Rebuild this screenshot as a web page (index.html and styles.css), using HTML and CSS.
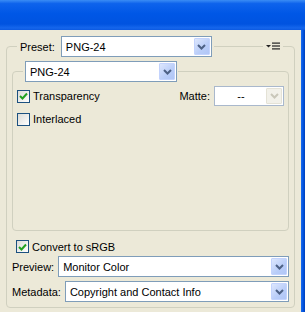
FILE: index.html
```html
<!DOCTYPE html>
<html lang="en">
<head>
  <meta charset="UTF-8">
  <title>Save for Web - PNG-24</title>
  <link rel="stylesheet" href="styles.css">
</head>
<body>

<div class="titlebar"></div>

<div class="window">
  <div class="panel">

    <!-- Preset group -->
    <fieldset class="group">
      <legend class="group-head">
        <span class="label">Preset:</span>
        <div class="combo combo-preset">
          <span class="combo-text">PNG-24</span>
          <span class="combo-btn"><svg width="9" height="6" viewBox="0 0 9 6"><path d="M1 1 L4.5 4.5 L8 1" fill="none" stroke="#4d6185" stroke-width="2"/></svg></span>
        </div>
      </legend>

      <div class="menu-btn">
        <svg width="14" height="8" viewBox="0 0 14 8">
          <path d="M0 3 H5 L2.5 5.5 Z" fill="#222"/>
          <rect x="6" y="0.5" width="8" height="1.2" fill="#222"/>
          <rect x="6" y="3.4" width="8" height="1.2" fill="#222"/>
          <rect x="6" y="6.3" width="8" height="1.2" fill="#222"/>
        </svg>
      </div>

      <!-- Format group -->
      <fieldset class="format">
        <legend class="format-head">
          <div class="combo combo-format">
            <span class="combo-text">PNG-24</span>
            <span class="combo-btn"><svg width="9" height="6" viewBox="0 0 9 6"><path d="M1 1 L4.5 4.5 L8 1" fill="none" stroke="#4d6185" stroke-width="2"/></svg></span>
          </div>
        </legend>

        <div class="options">
          <div class="row">
            <label class="check"><span class="box checked"><svg width="9" height="8" viewBox="0 0 9 8"><path d="M1 4 L3.5 6.5 L8 1.5" fill="none" stroke="#21a121" stroke-width="2"/></svg></span>Transparency</label>
            <div class="matte">
              <span class="label">Matte:</span>
              <div class="combo combo-matte disabled">
                <span class="combo-text">--</span>
                <span class="combo-btn"><svg width="9" height="6" viewBox="0 0 9 6"><path d="M1 1 L4.5 4.5 L8 1" fill="none" stroke="#c9c7ba" stroke-width="2"/></svg></span>
              </div>
            </div>
          </div>
          <div class="row">
            <label class="check"><span class="box"></span>Interlaced</label>
          </div>
        </div>
      </fieldset>

      <div class="row srgb">
        <label class="check"><span class="box checked"><svg width="9" height="8" viewBox="0 0 9 8"><path d="M1 4 L3.5 6.5 L8 1.5" fill="none" stroke="#21a121" stroke-width="2"/></svg></span>Convert to sRGB</label>
      </div>

      <div class="field">
        <span class="label">Preview:</span>
        <div class="combo">
          <span class="combo-text">Monitor Color</span>
          <span class="combo-btn"><svg width="9" height="6" viewBox="0 0 9 6"><path d="M1 1 L4.5 4.5 L8 1" fill="none" stroke="#4d6185" stroke-width="2"/></svg></span>
        </div>
      </div>

      <div class="field field-meta">
        <span class="label">Metadata:</span>
        <div class="combo">
          <span class="combo-text">Copyright and Contact Info</span>
          <span class="combo-btn"><svg width="9" height="6" viewBox="0 0 9 6"><path d="M1 1 L4.5 4.5 L8 1" fill="none" stroke="#4d6185" stroke-width="2"/></svg></span>
        </div>
      </div>
    </fieldset>

  </div>
  <div class="edge"></div>
</div>

</body>
</html>
```

FILE: styles.css
```css
* {
  box-sizing: border-box;
}

body {
  margin: 0;
  width: 305px;
  height: 312px;
  overflow: hidden;
  font-family: 'Liberation Sans', Arial, sans-serif;
  font-size: 11px;
  color: #000;
  background: #ece9d8;
}

.titlebar {
  height: 30px;
  background: linear-gradient(180deg, #3a8cf5 0%, #0e63ec 12%, #0057e6 45%, #0053e0 80%, #1566ec 93%, #0c59e0 100%);
}

.window {
  display: flex;
  height: 282px;
}

.panel {
  flex: 1;
  background: #ece9d8;
}

.edge {
  width: 4px;
  background: linear-gradient(90deg, #1a6cef, #0050dc 60%, #0040b8);
}

/* groups */
.group {
  position: relative;
  margin: 6px 6px 0 6px;
  padding: 4px 5px 5px 5px;
  border: 1px solid #d0d0bf;
  border-radius: 4px;
  min-width: 0;
}

.group-head {
  display: flex;
  align-items: center;
  margin-left: 5px;
  padding: 0 2px 0 3px;
  background: #ece9d8;
}

.group-head .label {
  margin-right: 6px;
}

/* sits on the group's top border */
.menu-btn {
  position: absolute;
  top: -16px;
  right: 11px;
  padding: 0 3px;
  height: 10px;
  display: flex;
  align-items: center;
  background: #ece9d8;
}

.format {
  margin: 0;
  padding: 4px 4px 4px 4px;
  border: 1px solid #d0d0bf;
  border-radius: 4px;
  min-width: 0;
}

.format-head {
  margin-left: 6px;
  padding: 0 1px 0 2px;
  background: #ece9d8;
}

.options {
  height: 140px;
  display: flex;
  flex-direction: column;
  gap: 3px;
}

/* rows */
.row {
  display: flex;
  align-items: center;
  height: 20px;
}

.srgb {
  margin-top: 6px;
  height: 19px;
  padding-left: 4px;
}

.check {
  display: flex;
  align-items: center;
  gap: 3px;
}

.box {
  width: 13px;
  height: 13px;
  border: 1px solid #1c5180;
  background: linear-gradient(135deg, #dcdcd7, #ffffff);
  display: flex;
  align-items: center;
  justify-content: center;
}

.matte {
  margin-left: auto;
  display: flex;
  align-items: center;
  gap: 4px;
}

.field {
  display: flex;
  align-items: center;
  gap: 4px;
}

.field .combo {
  flex: 1;
}

.field-meta {
  margin-top: 4px;
}

/* combo boxes */
.combo {
  display: flex;
  align-items: center;
  height: 21px;
  padding: 1px;
  border: 1px solid #7f9db9;
  background: #fff;
}

.combo-text {
  flex: 1;
  padding-left: 3px;
  white-space: nowrap;
  overflow: hidden;
}

.combo-btn {
  width: 16px;
  height: 17px;
  border: 1px solid #c3d3fd;
  border-radius: 1px;
  background: linear-gradient(135deg, #dde7fd, #b9cdf8 60%, #b0c6f6);
  display: flex;
  align-items: center;
  justify-content: center;
}

.combo-preset {
  width: 151px;
}

.combo-format {
  width: 152px;
}

.combo-matte {
  width: 70px;
  height: 20px;
}

.combo-matte .combo-text {
  text-align: center;
  padding-left: 0;
}

.combo-matte .combo-btn {
  height: 16px;
}

.disabled {
  border-color: #a9b8cc;
}

.disabled .combo-btn {
  border-color: #e4e2d6;
  background: #f2f1ea;
}
```
